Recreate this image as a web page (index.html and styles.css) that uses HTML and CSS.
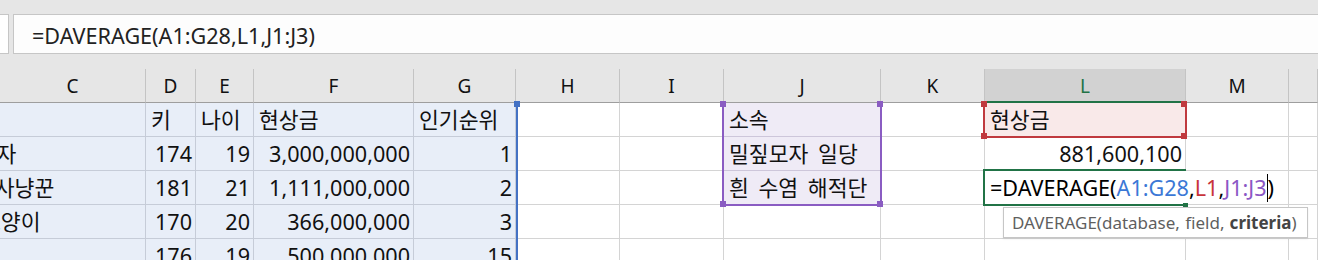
FILE: index.html
```html
<!DOCTYPE html>
<html lang="ko">
<head>
  <meta charset="UTF-8">
  <title>DAVERAGE</title>
  <link rel="stylesheet" href="styles.css">
</head>
<body>
  <div class="app">
    <div class="topband"></div>

    <div class="formula-row">
      <div class="namebox"></div>
      <div class="fx-input">=DAVERAGE(A1:G28,L1,J1:J3)</div>
    </div>

    <div class="sheet">
      <!-- column headers -->
      <div class="row r0">
        <div class="hdr">C</div>
        <div class="hdr">D</div>
        <div class="hdr">E</div>
        <div class="hdr">F</div>
        <div class="hdr">G</div>
        <div class="hdr">H</div>
        <div class="hdr">I</div>
        <div class="hdr">J</div>
        <div class="hdr">K</div>
        <div class="hdr hdr-active">L</div>
        <div class="hdr">M</div>
        <div class="hdr"></div>
      </div>

      <div class="row r1">
        <div class="cell db"></div>
        <div class="cell db">키</div>
        <div class="cell db">나이</div>
        <div class="cell db">현상금</div>
        <div class="cell db">인기순위</div>
        <div class="cell"></div>
        <div class="cell"></div>
        <div class="cell crit">소속</div>
        <div class="cell"></div>
        <div class="cell field">현상금</div>
        <div class="cell"></div>
        <div class="cell"></div>
      </div>

      <div class="row r2">
        <div class="cell db clip"><span class="shift-3">밀짚모자</span></div>
        <div class="cell db num">174</div>
        <div class="cell db num">19</div>
        <div class="cell db num">3,000,000,000</div>
        <div class="cell db num">1</div>
        <div class="cell"></div>
        <div class="cell"></div>
        <div class="cell crit">밀짚모자 일당</div>
        <div class="cell"></div>
        <div class="cell num">881,600,100</div>
        <div class="cell"></div>
        <div class="cell"></div>
      </div>

      <div class="row r3">
        <div class="cell db clip"><span class="shift-2">해적사냥꾼</span></div>
        <div class="cell db num">181</div>
        <div class="cell db num">21</div>
        <div class="cell db num">1,111,000,000</div>
        <div class="cell db num">2</div>
        <div class="cell"></div>
        <div class="cell"></div>
        <div class="cell crit">흰 수염 해적단</div>
        <div class="cell"></div>
        <div class="cell editing">
          <span class="edit-text">=DAVERAGE(<span class="ref-a">A1:G28</span>,<span class="ref-l">L1</span>,<span class="ref-j">J1:J3</span><span class="caret"></span>)</span>
          <div class="tooltip">DAVERAGE(database, field, <b>criteria</b>)</div>
        </div>
        <div class="cell no-left"></div>
        <div class="cell"></div>
      </div>

      <div class="row r4">
        <div class="cell db clip"><span class="shift-1">고양이</span></div>
        <div class="cell db num">170</div>
        <div class="cell db num">20</div>
        <div class="cell db num">366,000,000</div>
        <div class="cell db num">3</div>
        <div class="cell"></div>
        <div class="cell"></div>
        <div class="cell"></div>
        <div class="cell"></div>
        <div class="cell"></div>
        <div class="cell"></div>
        <div class="cell"></div>
      </div>

      <div class="row r5">
        <div class="cell db"></div>
        <div class="cell db num">176</div>
        <div class="cell db num">19</div>
        <div class="cell db num">500,000,000</div>
        <div class="cell db num">15</div>
        <div class="cell"></div>
        <div class="cell"></div>
        <div class="cell"></div>
        <div class="cell"></div>
        <div class="cell"></div>
        <div class="cell"></div>
        <div class="cell"></div>
      </div>

      <!-- range outlines drawn over the cells -->
      <div class="range range-db"></div>
      <div class="range range-crit"></div>
      <div class="range range-field"></div>
      <div class="range range-active"></div>
    </div>
  </div>
</body>
</html>
```

FILE: styles.css
```css
body {
  margin: 0;
  background: #e6e6e6;
  font-family: "Noto Sans", "Noto Sans CJK KR", sans-serif;
  color: #111;
}
.app {
  width: 1318px;
  height: 260px;
  overflow: hidden;
}
.topband {
  height: 14px;
}

/* formula bar */
.formula-row {
  display: flex;
  height: 40px;
  gap: 4px;
}
.namebox {
  width: 9px;
  background: #fff;
  box-sizing: border-box;
  border: 1px solid #c6c6c6;
  border-left: none;
}
.fx-input {
  flex: 1;
  box-sizing: border-box;
  border: 1px solid #c6c6c6;
  border-right: none;
  background: #fdfdfd;
  padding: 2px 0 0 18px;
  display: flex;
  align-items: center;
  font-size: 21.6px;
  color: #222;
}

/* grid */
.sheet {
  margin-top: 15px;
  display: grid;
  grid-template-columns: 146px 50px 58px 160px 102px 104px 104px 157px 104px 201px 103px 1fr;
  grid-template-rows: repeat(6, 34px);
  background: #fff;
}
.row {
  display: contents;
}
.r0 > * { grid-row: 1; }
.r1 > * { grid-row: 2; }
.r2 > * { grid-row: 3; }
.r3 > * { grid-row: 4; }
.r4 > * { grid-row: 5; }
.r5 > * { grid-row: 6; }
.row > :nth-child(1) { grid-column: 1; }
.row > :nth-child(2) { grid-column: 2; }
.row > :nth-child(3) { grid-column: 3; }
.row > :nth-child(4) { grid-column: 4; }
.row > :nth-child(5) { grid-column: 5; }
.row > :nth-child(6) { grid-column: 6; }
.row > :nth-child(7) { grid-column: 7; }
.row > :nth-child(8) { grid-column: 8; }
.row > :nth-child(9) { grid-column: 9; }
.row > :nth-child(10) { grid-column: 10; }
.row > :nth-child(11) { grid-column: 11; }
.row > :nth-child(12) { grid-column: 12; }

.hdr {
  background: #e6e6e6;
  box-sizing: border-box;
  border-right: 1px solid #c4c4c4;
  border-bottom: 1px solid #9e9e9e;
  display: flex;
  align-items: center;
  justify-content: center;
  padding-top: 1px;
  font-size: 19px;
  color: #111;
}
.hdr-active {
  background: #d2d2d2;
  color: #217346;
  border-bottom: 2px solid #217346;
}
.cell {
  box-sizing: border-box;
  border-right: 1px solid #d4d4d4;
  border-bottom: 1px solid #d4d4d4;
  display: flex;
  align-items: center;
  padding: 1px 4px 0 5px;
  font-size: 21.6px;
  line-height: 1;
  white-space: nowrap;
  overflow: hidden;
  word-spacing: 4px;
}
.num {
  justify-content: flex-end;
  padding-right: 3px;
}
.db {
  background: #e8eef8;
  border-color: #c6ccd8;
}
.crit {
  background: #efebf6;
  border-color: #cdc6da;
}
.field {
  background: #f9e9e9;
}
.clip {
  padding-left: 0;
}
.shift-3 { margin-left: -63px; }
.shift-2 { margin-left: -45px; }
.shift-1 { margin-left: -19px; }

/* cell being edited */
.editing {
  overflow: visible;
  border-right: none;
  position: relative;
  z-index: 2;
}
.edit-text {
  color: #000;
}
.ref-a { color: #3b78d6; }
.ref-l { color: #c8343b; }
.ref-j { color: #8b57c4; }
.caret {
  display: inline-block;
  width: 1px;
  height: 28px;
  background: #000;
  vertical-align: -6px;
}
.tooltip {
  position: absolute;
  top: 36px;
  left: 18px;
  width: 305px;
  height: 31px;
  box-sizing: border-box;
  background: #fff;
  border: 1px solid #c6c6c6;
  box-shadow: 0 1px 2px rgba(0, 0, 0, 0.08);
  font-size: 17px;
  word-spacing: 1px;
  color: #5f5f5f;
  display: flex;
  align-items: center;
  padding-left: 8px;
}
.tooltip b {
  color: #444;
  margin-left: 0.3em;
}

/* range outlines */
.range {
  position: relative;
  pointer-events: none;
  box-sizing: border-box;
}
.range::before,
.range::after {
  content: "";
  position: absolute;
  width: 6px;
  height: 6px;
}
.range-db {
  grid-column: 5;
  grid-row: 2 / 7;
  margin-right: -2px;
  border-right: 2px solid #4472c4;
}
.range-db::before {
  background: #4472c4;
  right: -4px;
  top: -2px;
}
.range-crit {
  grid-column: 8;
  grid-row: 2 / 5;
  margin: 0 -1px -1px -2px;
  border: 2px solid #8a5cc2;
  border-top: none;
}
.range-crit::before {
  left: -4px;
  top: -2px;
  background: #8a5cc2;
  box-shadow: 157px 0 0 #8a5cc2, 0 100px 0 #8a5cc2, 157px 100px 0 #8a5cc2;
}
.range-field {
  grid-column: 10;
  grid-row: 2;
  margin: 0 -1px -1px -2px;
  border: 2px solid #c0393e;
  border-top: none;
}
.range-field::before {
  left: -4px;
  top: -2px;
  background: #c0393e;
  box-shadow: 200px 0 0 #c0393e, 0 32px 0 #c0393e, 200px 32px 0 #c0393e;
}
.range-active {
  grid-column: 10;
  grid-row: 4;
  margin: -2px 0 -1px -2px;
  border: 2px solid #217346;
  border-right: none;
  z-index: 3;
}
.range-active::after {
  background: #217346;
  right: -2px;
  bottom: -3px;
  width: 5px;
  height: 4px;
}
```
